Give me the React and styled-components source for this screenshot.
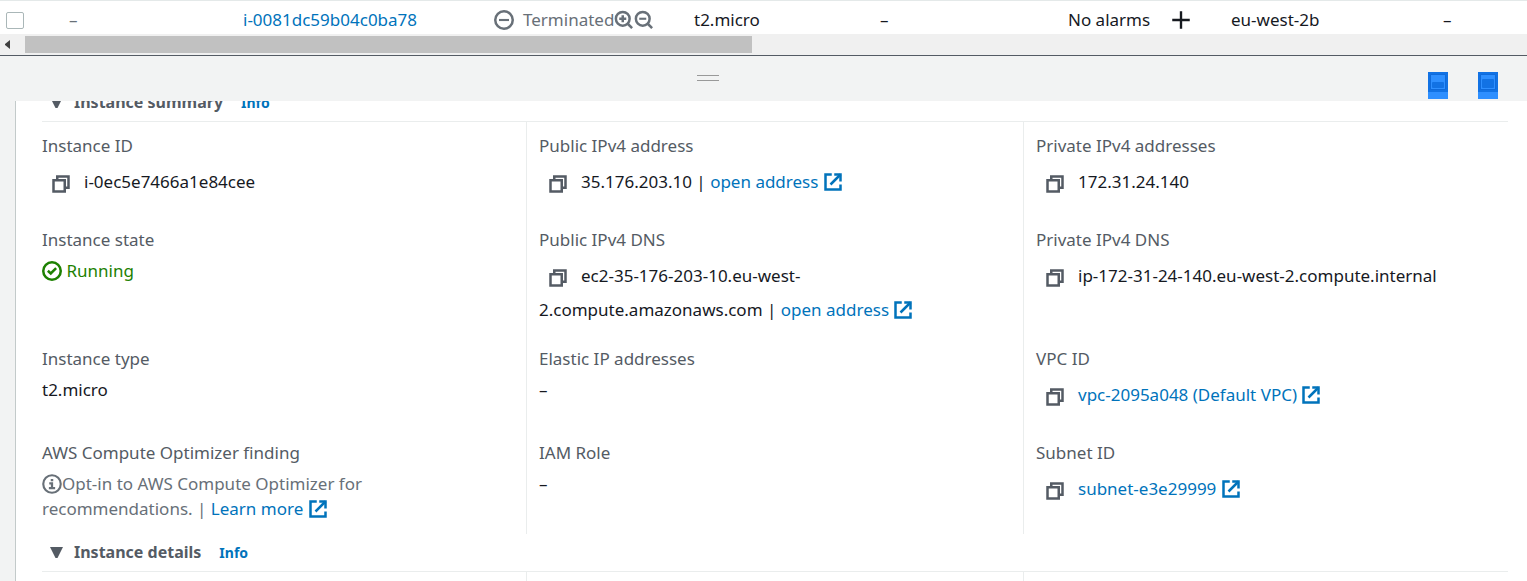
import React from "react";
import styled, { createGlobalStyle } from "styled-components";

const GlobalStyle = createGlobalStyle`
  *, *::before, *::after { box-sizing: border-box; }
  body {
    margin: 0;
    background: #fff;
    color: #16191f;
    font-family: "Noto Sans", "Open Sans", sans-serif;
    font-size: 17px;
    line-height: 25px;
  }
  button { font: inherit; color: inherit; background: none; border: 0; padding: 0; cursor: pointer; }
`;

const Page = styled.div`
  display: flex;
  flex-direction: column;
  height: 100vh;
  overflow: hidden;
`;

/* Instances table */
const TableWrap = styled.div`
  flex: none;
  overflow: hidden;
  border-top: 1px solid #e4e9e9;
`;

const Table = styled.table`
  width: 100%;
  table-layout: fixed;
  border-collapse: collapse;
`;

const Col = styled.col`
  width: ${(p) => p.$width};
`;

const Cell = styled.td`
  height: 33px;
  padding: 4px 0 0 20px;
  white-space: nowrap;
  color: ${(p) => (p.$muted ? "#687078" : "inherit")};
`;

const CheckCell = styled(Cell)`
  padding-left: 6px;
`;

const Checkbox = styled.input`
  appearance: none;
  display: block;
  width: 18px;
  height: 17px;
  margin: 2px 0 0;
  border: 1px solid #aab7b8;
  border-radius: 2px;
  background: #fff;
`;

const Inline = styled.span`
  display: flex;
  align-items: center;
  gap: ${(p) => p.$gap || 0}px;
`;

const IconButton = styled.button`
  display: flex;
`;

/* Horizontal scroll bar */
const ScrollBar = styled.div`
  flex: none;
  display: flex;
  align-items: center;
  height: 21px;
  background: #f0f0f0;
`;

const ScrollArrow = styled.button`
  display: flex;
  width: 25px;
  padding-left: 5px;
`;

const ScrollTrack = styled.div`
  flex: 1;
`;

const ScrollThumb = styled.div`
  width: 48.4%;
  min-width: 40px;
  height: 17px;
  background: #c1c1c1;
`;

/* Split panel */
const Panel = styled.section`
  flex: 1;
  min-height: 0;
  display: flex;
  flex-direction: column;
  border-top: 1px solid #545b64;
  background: #f2f3f3;
`;

const PanelBar = styled.div`
  flex: none;
  display: flex;
  align-items: center;
  height: 45px;
`;

const HandleArea = styled.div`
  flex: 1;
  display: flex;
  justify-content: center;
  padding-bottom: 2px;
`;

const Handle = styled.button`
  width: 22px;
  height: 6px;
  border-top: 1px solid #999;
  border-bottom: 1px solid #999;
  cursor: ns-resize;
`;

const PanelActions = styled.div`
  display: flex;
  gap: 30px;
  padding: 16px 29px 0 13px;
  align-self: flex-start;
`;

const PanelAction = styled.button`
  display: flex;
  align-items: flex-start;
  height: 27px;
  background: #2e8fff;
`;

const PanelBody = styled.div`
  flex: 1;
  min-height: 0;
  margin-left: 15px;
  padding: 0 7px 0 13px;
  overflow: hidden;
  border-left: 1px solid #c3caca;
  background: #fff;
`;

/* Holds the details at their current scroll position */
const Scrolled = styled.div`
  margin-top: -17px;
`;

const SectionHeader = styled.header`
  display: flex;
  align-items: center;
  height: 38px;
  margin: 0 12px 0 13px;
  padding: 0 0 1px 8px;
  border-bottom: 1px solid #eaeded;
`;

const SectionToggle = styled.button`
  display: flex;
  align-items: center;
  gap: 11px;
  color: #545b64;
  font-weight: 700;
`;

const SectionTitle = styled.h2`
  margin: 0;
  font-size: 16px;
  line-height: 25px;
`;

const Link = styled.a`
  color: #0073bb;
  text-decoration: none;
`;

const InfoLink = styled(Link)`
  margin-left: 18px;
  font-size: 14px;
  font-weight: 700;
`;

const Grid = styled.dl`
  display: grid;
  grid-template-columns: repeat(3, minmax(0, 1fr));
  margin: 0;
`;

const Field = styled.div`
  min-height: 25px;
  padding: ${(p) => (p.$first ? "11px" : "0")} 12px ${(p) => (p.$last ? "13px" : "24px")};
  border-left: 1px solid ${(p) => (p.$lead ? "transparent" : "#eaeded")};
`;

const Label = styled.dt`
  margin-bottom: 6px;
  color: #545b64;
`;

const Value = styled.dd`
  max-width: ${(p) => (p.$narrow ? "380px" : "none")};
  margin: 0;
  color: ${(p) => p.$color || "inherit"};
`;

const CopyButton = styled.button`
  display: inline-flex;
  align-items: center;
  height: 39px;
  padding: 0 13px 0 9px;
  color: #545b64;
  vertical-align: middle;
`;

const Svg = styled.svg`
  flex: none;
  width: 20px;
  height: 20px;
  fill: none;
  stroke: currentColor;
  stroke-width: 2;
  vertical-align: -4px;
`;

const Icon = ({ children }) => (
  <Svg viewBox="0 0 16 16" aria-hidden="true">{children}</Svg>
);

const CopyIcon = () => (
  <Icon>
    <path d="M2 5h9v9H2z" />
    <path d="M5 5V2h9v9h-3" />
  </Icon>
);

const ExternalIcon = () => (
  <Icon>
    <path d="M14 10v4H2V2h5" />
    <path d="M9 2h5v5.500" />
    <path d="M6 10l8-8" />
  </Icon>
);

const CheckIcon = () => (
  <Icon>
    <circle cx="8" cy="8" r="7" />
    <path d="M4.700 7.800L7 10l4.300-4.300" />
  </Icon>
);

const StopIcon = () => (
  <Icon>
    <circle cx="8" cy="8" r="7" />
    <path d="M4 8h8" strokeWidth="1.700" />
  </Icon>
);

const InfoIcon = () => (
  <Icon>
    <circle cx="8" cy="8" r="7" strokeWidth="1.700" />
    <path d="M7 4.800h2M5.800 7.500H8v4M5.500 11.300h5" strokeWidth="1.800" />
  </Icon>
);

const ZoomIcon = ({ plus }) => (
  <Icon>
    <circle cx="7" cy="7" r="5.500" strokeWidth="2" />
    <path d="M11 11l3.500 3.500" />
    <path d={plus ? "M4.200 7h5.600M7 4.200v5.600" : "M4.200 7h5.600"} strokeWidth={plus ? 2 : 1.700} />
  </Icon>
);

const PlusIcon = () => (
  <Icon>
    <path d="M8 1v14M1 8h14" strokeWidth="1.900" />
  </Icon>
);

const Caret = () => (
  <svg width="13" height="11" viewBox="0 0 13 11" aria-hidden="true">
    <path d="M0 0h13L7.500 11h-2z" fill="#545b64" />
  </svg>
);

const LeftArrow = () => (
  <svg width="6" height="9" viewBox="0 0 6 9" aria-hidden="true">
    <path d="M5 0v9L0 5V4z" fill="#404040" />
  </svg>
);

const WindowIcon = ({ tall }) => (
  <svg width="20" height="20" viewBox="0 0 20 20" aria-hidden="true">
    <path d="M0 0h20v20H0z" fill="#1272e4" />
    <path d="M2.500 2.500h15v15h-15z" fill="#2e8fff" stroke="#0f6ada" strokeWidth="1" />
    <path d="M3 16.500h14" stroke="#2e8fff" />
    <rect x="4" y={tall ? 7 : 10} width="12" height={tall ? 9 : 6} rx="1" fill="#1272e4" />
  </svg>
);

const Copy = ({ what }) => (
  <CopyButton type="button" aria-label={`Copy ${what}`}>
    <CopyIcon />
  </CopyButton>
);

const External = ({ children }) => (
  <Link href="#">
    {children} <ExternalIcon />
  </Link>
);

const Section = ({ title, children }) => (
  <section>
    <SectionHeader>
      <SectionTitle>
        <SectionToggle type="button" aria-expanded="true">
          <Caret />
          {title}
        </SectionToggle>
      </SectionTitle>
      <InfoLink href="#">Info</InfoLink>
    </SectionHeader>
    <Grid>{children}</Grid>
  </section>
);

const fields = [
  { label: "Instance ID", value: <><Copy what="instance ID" />i-0ec5e7466a1e84cee</> },
  { label: "Public IPv4 address", value: <><Copy what="public IPv4 address" />35.176.203.10 | <External>open address</External></> },
  { label: "Private IPv4 addresses", value: <><Copy what="private IPv4 address" />172.31.24.140</> },
  { label: "Instance state", color: "#1d8102", value: <><CheckIcon /> Running</> },
  { label: "Public IPv4 DNS", narrow: true, value: <><Copy what="public IPv4 DNS" />ec2-35-176-203-10.eu-west-<wbr />2.compute.amazonaws.com | <External>open address</External></> },
  { label: "Private IPv4 DNS", value: <><Copy what="private IPv4 DNS" />ip-172-31-24-140.eu-west-2.compute.internal</> },
  { label: "Instance type", value: "t2.micro" },
  { label: "Elastic IP addresses", value: "–" },
  { label: "VPC ID", value: <><Copy what="VPC ID" /><External>vpc-2095a048 (Default VPC)</External></> },
  { label: "AWS Compute Optimizer finding", color: "#687078", narrow: true, value: <><InfoIcon />Opt-in to AWS Compute Optimizer for recommendations. | <External>Learn more</External></> },
  { label: "IAM Role", value: "–" },
  { label: "Subnet ID", value: <><Copy what="subnet ID" /><External>subnet-e3e29999</External></> },
];

const columnWidths = ["49px", "174px", "251px", "200px", "186px", "188px", "163px", "212px", "auto"];

export default function App() {
  return (
    <Page>
      <GlobalStyle />
      <TableWrap>
        <Table>
          <colgroup>
            {columnWidths.map((w, i) => <Col key={i} $width={w} />)}
          </colgroup>
          <tbody>
            <tr>
              <CheckCell><Checkbox type="checkbox" aria-label="Select instance i-0081dc59b04c0ba78" /></CheckCell>
              <Cell $muted>–</Cell>
              <Cell><Link href="#">i-0081dc59b04c0ba78</Link></Cell>
              <Cell $muted>
                <Inline>
                  <Inline $gap={9}><StopIcon />Terminated</Inline>
                  <IconButton type="button" aria-label="Filter for this value"><ZoomIcon plus /></IconButton>
                  <IconButton type="button" aria-label="Filter out this value"><ZoomIcon /></IconButton>
                </Inline>
              </Cell>
              <Cell>t2.micro</Cell>
              <Cell>–</Cell>
              <Cell>
                <Inline $gap={21}>
                  No alarms
                  <IconButton type="button" aria-label="Add alarm"><PlusIcon /></IconButton>
                </Inline>
              </Cell>
              <Cell>eu-west-2b</Cell>
              <Cell>–</Cell>
            </tr>
          </tbody>
        </Table>
      </TableWrap>
      <ScrollBar>
        <ScrollArrow type="button" aria-label="Scroll left"><LeftArrow /></ScrollArrow>
        <ScrollTrack><ScrollThumb /></ScrollTrack>
      </ScrollBar>
      <Panel>
        <PanelBar>
          <HandleArea><Handle type="button" aria-label="Resize panel" /></HandleArea>
          <PanelActions>
            <PanelAction type="button" aria-label="Half height"><WindowIcon /></PanelAction>
            <PanelAction type="button" aria-label="Full height"><WindowIcon tall /></PanelAction>
          </PanelActions>
        </PanelBar>
        <PanelBody>
          <Scrolled>
            <Section title="Instance summary">
              {fields.map((f, i) => (
                <Field key={f.label} $first={i < 3} $last={i >= fields.length - 3} $lead={i % 3 === 0}>
                  <Label>{f.label}</Label>
                  <Value $color={f.color} $narrow={f.narrow}>{f.value}</Value>
                </Field>
              ))}
            </Section>
            <Section title="Instance details">
              <Field $lead />
              <Field />
              <Field />
            </Section>
          </Scrolled>
        </PanelBody>
      </Panel>
    </Page>
  );
}
